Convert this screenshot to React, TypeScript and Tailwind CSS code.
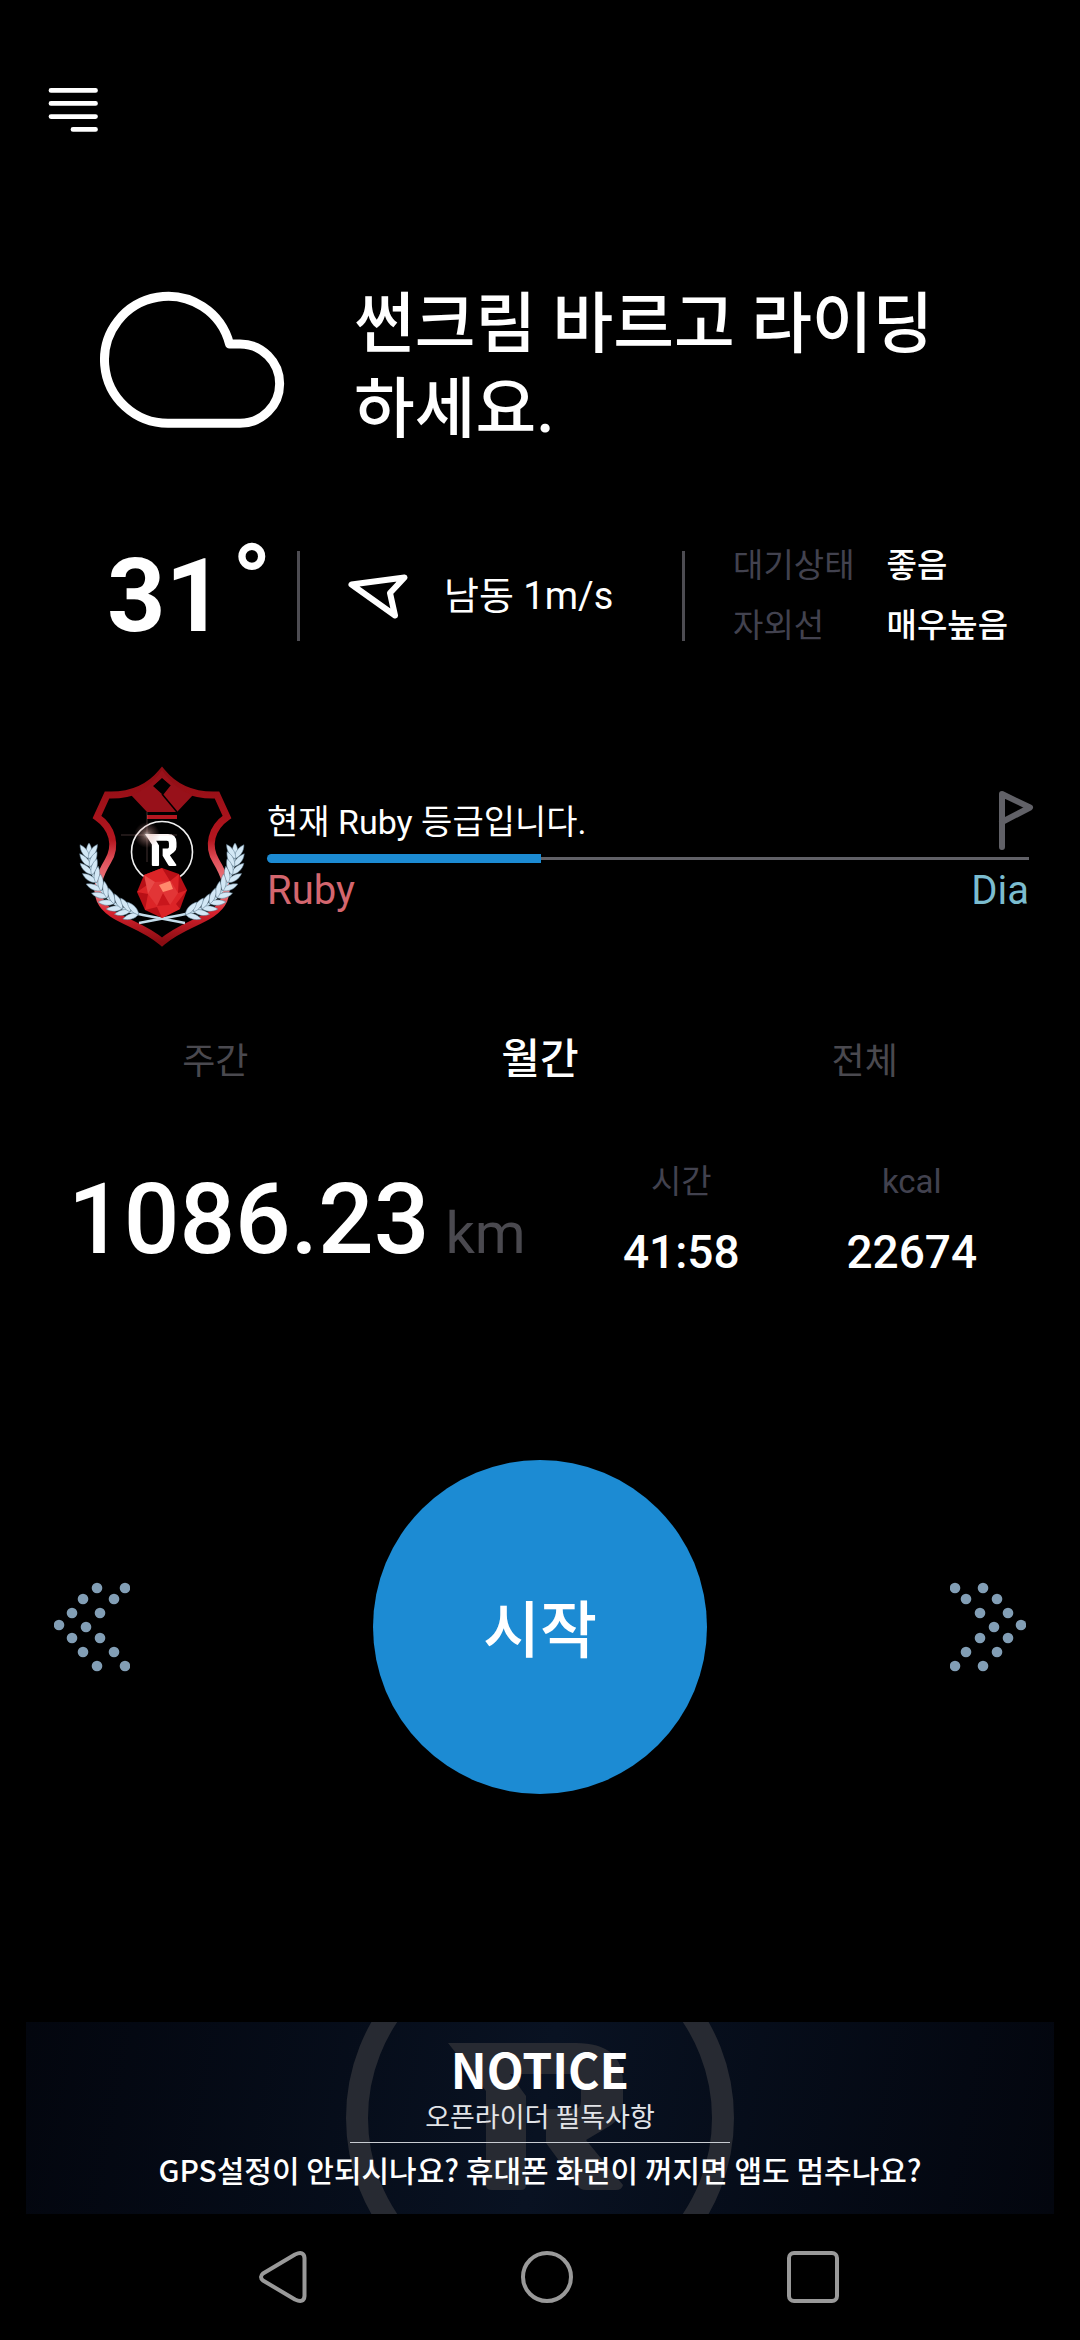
import { useState } from "react"

const dots = [
  [5, 43],
  [18, 31],
  [18, 56],
  [29, 17],
  [29, 70],
  [43, 6],
  [43, 84],
  [32, 45],
  [46, 31],
  [46, 56],
  [60, 17],
  [60, 70],
  [71, 6],
  [71, 84],
]

// laurel stem: x, y and the direction in which the twig grows
const twigs = [
  [18, 100, -2],
  [19, 108, -8],
  [21, 116, -16],
  [25, 124, -26],
  [30, 132, -36],
  [36, 139, -44],
  [43, 145, -54],
  [51, 150, -62],
  [59, 153, -70],
  [67, 156, -76],
]

const periods = [
  { id: "week", label: "주간" },
  { id: "month", label: "월간" },
  { id: "all", label: "전체" },
]

function DottedArrow({ flip }: { flip?: boolean }) {
  return (
    <svg width="76" height="90" viewBox="0 0 76 90" fill="#829eb5" className={flip ? "-scale-x-100" : ""}>
      {dots.map(([x, y]) => (
        <circle key={`${x}-${y}`} cx={x} cy={y} r="5.3" />
      ))}
    </svg>
  )
}

function LogoMark({ transform, fill }: { transform: string; fill: string }) {
  return (
    <path
      transform={transform}
      fill={fill}
      d="M0 0H128Q175 0 175 40V60Q175 75 160 84L138 97L175 142Q174 147 168 147H138Q132 147 129 142L98 100V66H126Q133 66 133 58V42Q133 31 122 31H62L78 53V142Q78 147 73 147H44Q38 147 38 142V48Z"
    />
  )
}

function Laurel() {
  return (
    <g fill="#d3e8f6" stroke="#5d7a8e" strokeWidth="0.5">
      <path d="M18 96C20 130 42 152 72 157L114 165" fill="none" stroke="#c4dcea" strokeWidth="2.5" />
      <path d="M0 0C-4 -5 -3 -11 0 -15C3 -11 4 -5 0 0Z" transform="translate(18 100)" />
      {twigs.map(([x, y, angle]) => (
        <g key={x} transform={`translate(${x} ${y}) rotate(${angle})`}>
          <path d="M0 1C-4 -4 -3.500 -11 0 -16C3 -11 4 -4 0 1Z" transform="rotate(-32)" />
          <path d="M0 1C-4 -4 -3.500 -11 0 -16C3 -11 4 -4 0 1Z" transform="rotate(34)" />
        </g>
      ))}
    </g>
  )
}

function RubyBadge() {
  return (
    <svg width="182" height="192" viewBox="0 0 182 192" role="img" aria-label="Ruby" className="shrink-0">
      <defs>
        <linearGradient id="shield" x1="0" y1="0" x2="0" y2="1">
          <stop offset="0" stopColor="#8e0d14" />
          <stop offset="0.4" stopColor="#b5161f" />
          <stop offset="0.52" stopColor="#e0505a" />
          <stop offset="0.7" stopColor="#f08a8e" />
          <stop offset="0.82" stopColor="#d9222e" />
          <stop offset="1" stopColor="#8a0c12" />
        </linearGradient>
        <radialGradient id="flare">
          <stop offset="0" stopColor="#fff" />
          <stop offset="0.3" stopColor="#e8b8b0" stopOpacity="0.6" />
          <stop offset="1" stopColor="#c08080" stopOpacity="0" />
        </radialGradient>
      </defs>
      <path
        d="M91 14C78 30 60 38 36 37L26 59C42 70 46 88 37 103C28 118 24 130 29 142C38 162 68 164 91 184C114 164 144 162 153 142C158 130 154 118 145 103C136 88 140 70 156 59L146 37C122 38 104 30 91 14Z"
        fill="none"
        stroke="url(#shield)"
        strokeWidth="7"
      />
      <path d="M91 12C82 25 73 33 60 37L76 54H106L122 37C109 33 100 25 91 12ZM91 20L100 27L92 37L82 28Z" fill="#98111a" fillRule="evenodd" />
      <path d="M91 36L106 54" stroke="#000" strokeWidth="1.5" />
      <path d="M76 57H106V61H76Z" fill="#b5161f" />
      <circle cx="91" cy="94" r="30.5" fill="#000" stroke="#f0f0f0" strokeWidth="1.6" />
      <LogoMark transform="translate(74 76) scale(0.18 0.218)" fill="#fff" />
      <circle cx="76" cy="77" r="13" fill="url(#flare)" opacity="0.7" />
      <path d="M50 77H106M76 54V104" stroke="#e7b3ac" strokeWidth="0.7" opacity="0.4" />
      <Laurel />
      <g transform="translate(182 0) scale(-1 1)">
        <Laurel />
      </g>
      <g transform="translate(0 4)">
        <path d="M91 106L108 112L116 128L109 147L91 156L74 148L66 130L73 113Z" fill="#b80f16" />
        <path d="M91 106L99 119L108 112L107 131L116 128L105 142L109 147L91 156L86 145L74 148L77 132L66 130L79 121L73 113Z" fill="#dc2427" />
        <path d="M84 120L100 119L107 131L99 143L86 144L77 132Z" fill="#e23536" />
        <path d="M88 123L99 119L102 127L92 130Z" fill="#ff8a6c" />
        <path d="M86 144L92 131L99 143Z" fill="#c9161c" />
        <path d="M73 113L84 120L77 132Z" fill="#e84a48" />
      </g>
    </svg>
  )
}

export default function App() {
  const [period, setPeriod] = useState("month")

  return (
    <div className="flex min-h-screen flex-col bg-black font-[Roboto,'Noto_Sans_CJK_KR',sans-serif] text-white">
      <header className="px-12 pt-[86px]">
        <button type="button" aria-label="메뉴" className="block">
          <svg width="50" height="48" viewBox="0 0 50 48" stroke="#fff" strokeWidth="4.8" strokeLinecap="round">
            <path d="M3 4.400H47.500M3 17.400H47.500M3 30.600H47.500M25 43.400H47.500" />
          </svg>
        </button>
      </header>

      <main className="flex flex-1 flex-col">
        {/* Weather */}
        <section className="flex items-start gap-[68px] pl-[98px] pt-36">
          <svg width="188" height="140" viewBox="0 0 188 140" fill="none" stroke="#fff" strokeWidth="9" className="mt-3 shrink-0">
            <path d="M70 133.300A63.500 63.500 0 1 1 131.500 54H142A39.600 39.600 0 0 1 142 133.300Z" strokeLinejoin="round" />
          </svg>
          <h1 className="mt-1 w-[600px] text-[66px] leading-[85px] font-medium break-keep">썬크림 바르고 라이딩 하세요.</h1>
        </section>

        <section className="mt-[94px] flex h-[100px] items-center pl-[107px] pr-[72px]">
          <p className="flex w-[190px] items-start font-bold">
            <span className="text-[102px] leading-[96px]">31</span>
            <span className="ml-2 text-[102px] leading-[68px]">°</span>
          </p>
          <div className="h-[90px] w-[3px] bg-[#4d4c52]" />
          <div className="flex flex-1 items-center gap-9 pl-12">
            <svg width="60" height="48" viewBox="0 0 60 48" fill="none" stroke="#fff" strokeWidth="6" strokeLinejoin="round">
              <path d="M3.500 12.500L56.500 5.500L42 21L47 43.500Z" />
            </svg>
            <span className="text-[38px] leading-[48px]">남동 1m/s</span>
          </div>
          <div className="h-[90px] w-[3px] bg-[#4d4c52]" />
          <dl className="grid grid-cols-[auto_auto] gap-x-8 pl-12 text-[33px] leading-[60px]">
            <dt className="text-[#42424f]">대기상태</dt>
            <dd className="font-medium">좋음</dd>
            <dt className="text-[#42424f]">자외선</dt>
            <dd className="font-medium">매우높음</dd>
          </dl>
        </section>

        {/* Grade */}
        <section className="mt-28 flex pl-[71px] pr-[46px]">
          <RubyBadge />
          <div className="ml-[14px] flex-1 pt-8">
            <div className="flex h-[64px] items-start justify-between">
              <p className="pt-2 text-[34px] leading-[48px]">현재 Ruby 등급입니다.</p>
              <svg width="38" height="62" viewBox="0 0 38 62" fill="none" stroke="#616167" strokeWidth="6" strokeLinecap="round" strokeLinejoin="round">
                <path d="M6 57V4L34 17.500L6 32" />
              </svg>
            </div>
            <div className="mr-[5px] flex items-center">
              <div className="h-[9px] w-[36%] rounded-l-full bg-[#1c8bd3]" />
              <div className="h-[3px] flex-1 bg-[#616167]" />
            </div>
            <div className="mr-[5px] mt-1 flex justify-between text-[40px] leading-[48px]">
              <span className="text-[#d4666e]">Ruby</span>
              <span className="text-[#7bbccf]">Dia</span>
            </div>
          </div>
        </section>

        {/* Records */}
        <nav className="mx-[53px] mt-20 grid grid-cols-3 items-baseline">
          {periods.map((p) => (
            <button
              key={p.id}
              type="button"
              onClick={() => setPeriod(p.id)}
              className={period === p.id ? "text-[42px] leading-[60px] font-medium" : "text-[36px] leading-[60px] text-[#4a494f]"}
            >
              {p.label}
            </button>
          ))}
        </nav>

        <section className="mt-[66px] flex pl-[68px] pr-[53px]">
          <p className="flex w-[498px] items-baseline gap-4 pt-3">
            <span className="text-[98px] leading-[100px] font-medium">1086.23</span>
            <span className="text-[58px] leading-[60px] text-[#4a494f]">km</span>
          </p>
          <dl className="grid flex-1 grid-cols-2 text-center">
            <div>
              <dt className="text-[33px] leading-[48px] text-[#42424f]">시간</dt>
              <dd className="mt-4 text-[46px] leading-[60px] font-medium">41:58</dd>
            </div>
            <div>
              <dt className="text-[33px] leading-[48px] text-[#42424f]">kcal</dt>
              <dd className="mt-4 text-[46px] leading-[60px] font-medium">22674</dd>
            </div>
          </dl>
        </section>

        <section className="mt-[178px] flex items-center justify-between px-[54px]">
          <button type="button" aria-label="이전">
            <DottedArrow />
          </button>
          <button type="button" className="size-[334px] rounded-full bg-[#1c8bd3] pt-2 text-[62px] font-medium">
            시작
          </button>
          <button type="button" aria-label="다음">
            <DottedArrow flip />
          </button>
        </section>
      </main>

      {/* Notice banner */}
      <a
        href="#notice"
        className="relative mx-[26px] flex h-48 flex-col items-center overflow-hidden bg-linear-100 from-[#03060e] via-[#091222] to-[#03060e] font-['Noto_Sans_CJK_KR',sans-serif]"
      >
        <svg viewBox="0 0 400 192" width="400" height="192" className="absolute left-1/2 -translate-x-1/2">
          <circle cx="200" cy="96" r="183" fill="none" stroke="#272a32" strokeWidth="22" />
          <LogoMark transform="translate(108 21)" fill="#272a32" />
        </svg>
        <strong className="relative mt-5 text-[48px] leading-[52px] font-bold">NOTICE</strong>
        <span className="relative mt-1 text-[27px] leading-9 text-[#e2e4e8]">오픈라이더 필독사항</span>
        <span className="relative mt-2 h-px w-[380px] bg-[#c9ccd2]" />
        <span className="relative mt-2 text-[30px] leading-9 font-medium">GPS설정이 안되시나요? 휴대폰 화면이 꺼지면 앱도 멈추나요?</span>
      </a>

      <footer className="flex h-[126px] items-center justify-between pl-[257px] pr-[239px]">
        <button type="button" aria-label="뒤로">
          <svg width="52" height="56" viewBox="0 0 52 56" fill="none" stroke="#999" strokeWidth="4" strokeLinejoin="round">
            <path d="M6 24.500L38 5.500Q47 1.500 47.500 9V47Q47 54.500 38 50.500L6 31.500Q2 28 6 24.500Z" />
          </svg>
        </button>
        <button type="button" aria-label="홈">
          <svg width="56" height="56" viewBox="0 0 56 56" fill="none" stroke="#999" strokeWidth="4">
            <circle cx="28" cy="28" r="24" />
          </svg>
        </button>
        <button type="button" aria-label="최근 앱">
          <svg width="56" height="56" viewBox="0 0 56 56" fill="none" stroke="#999" strokeWidth="4">
            <rect x="4" y="4" width="48" height="48" rx="5" />
          </svg>
        </button>
      </footer>
    </div>
  )
}
